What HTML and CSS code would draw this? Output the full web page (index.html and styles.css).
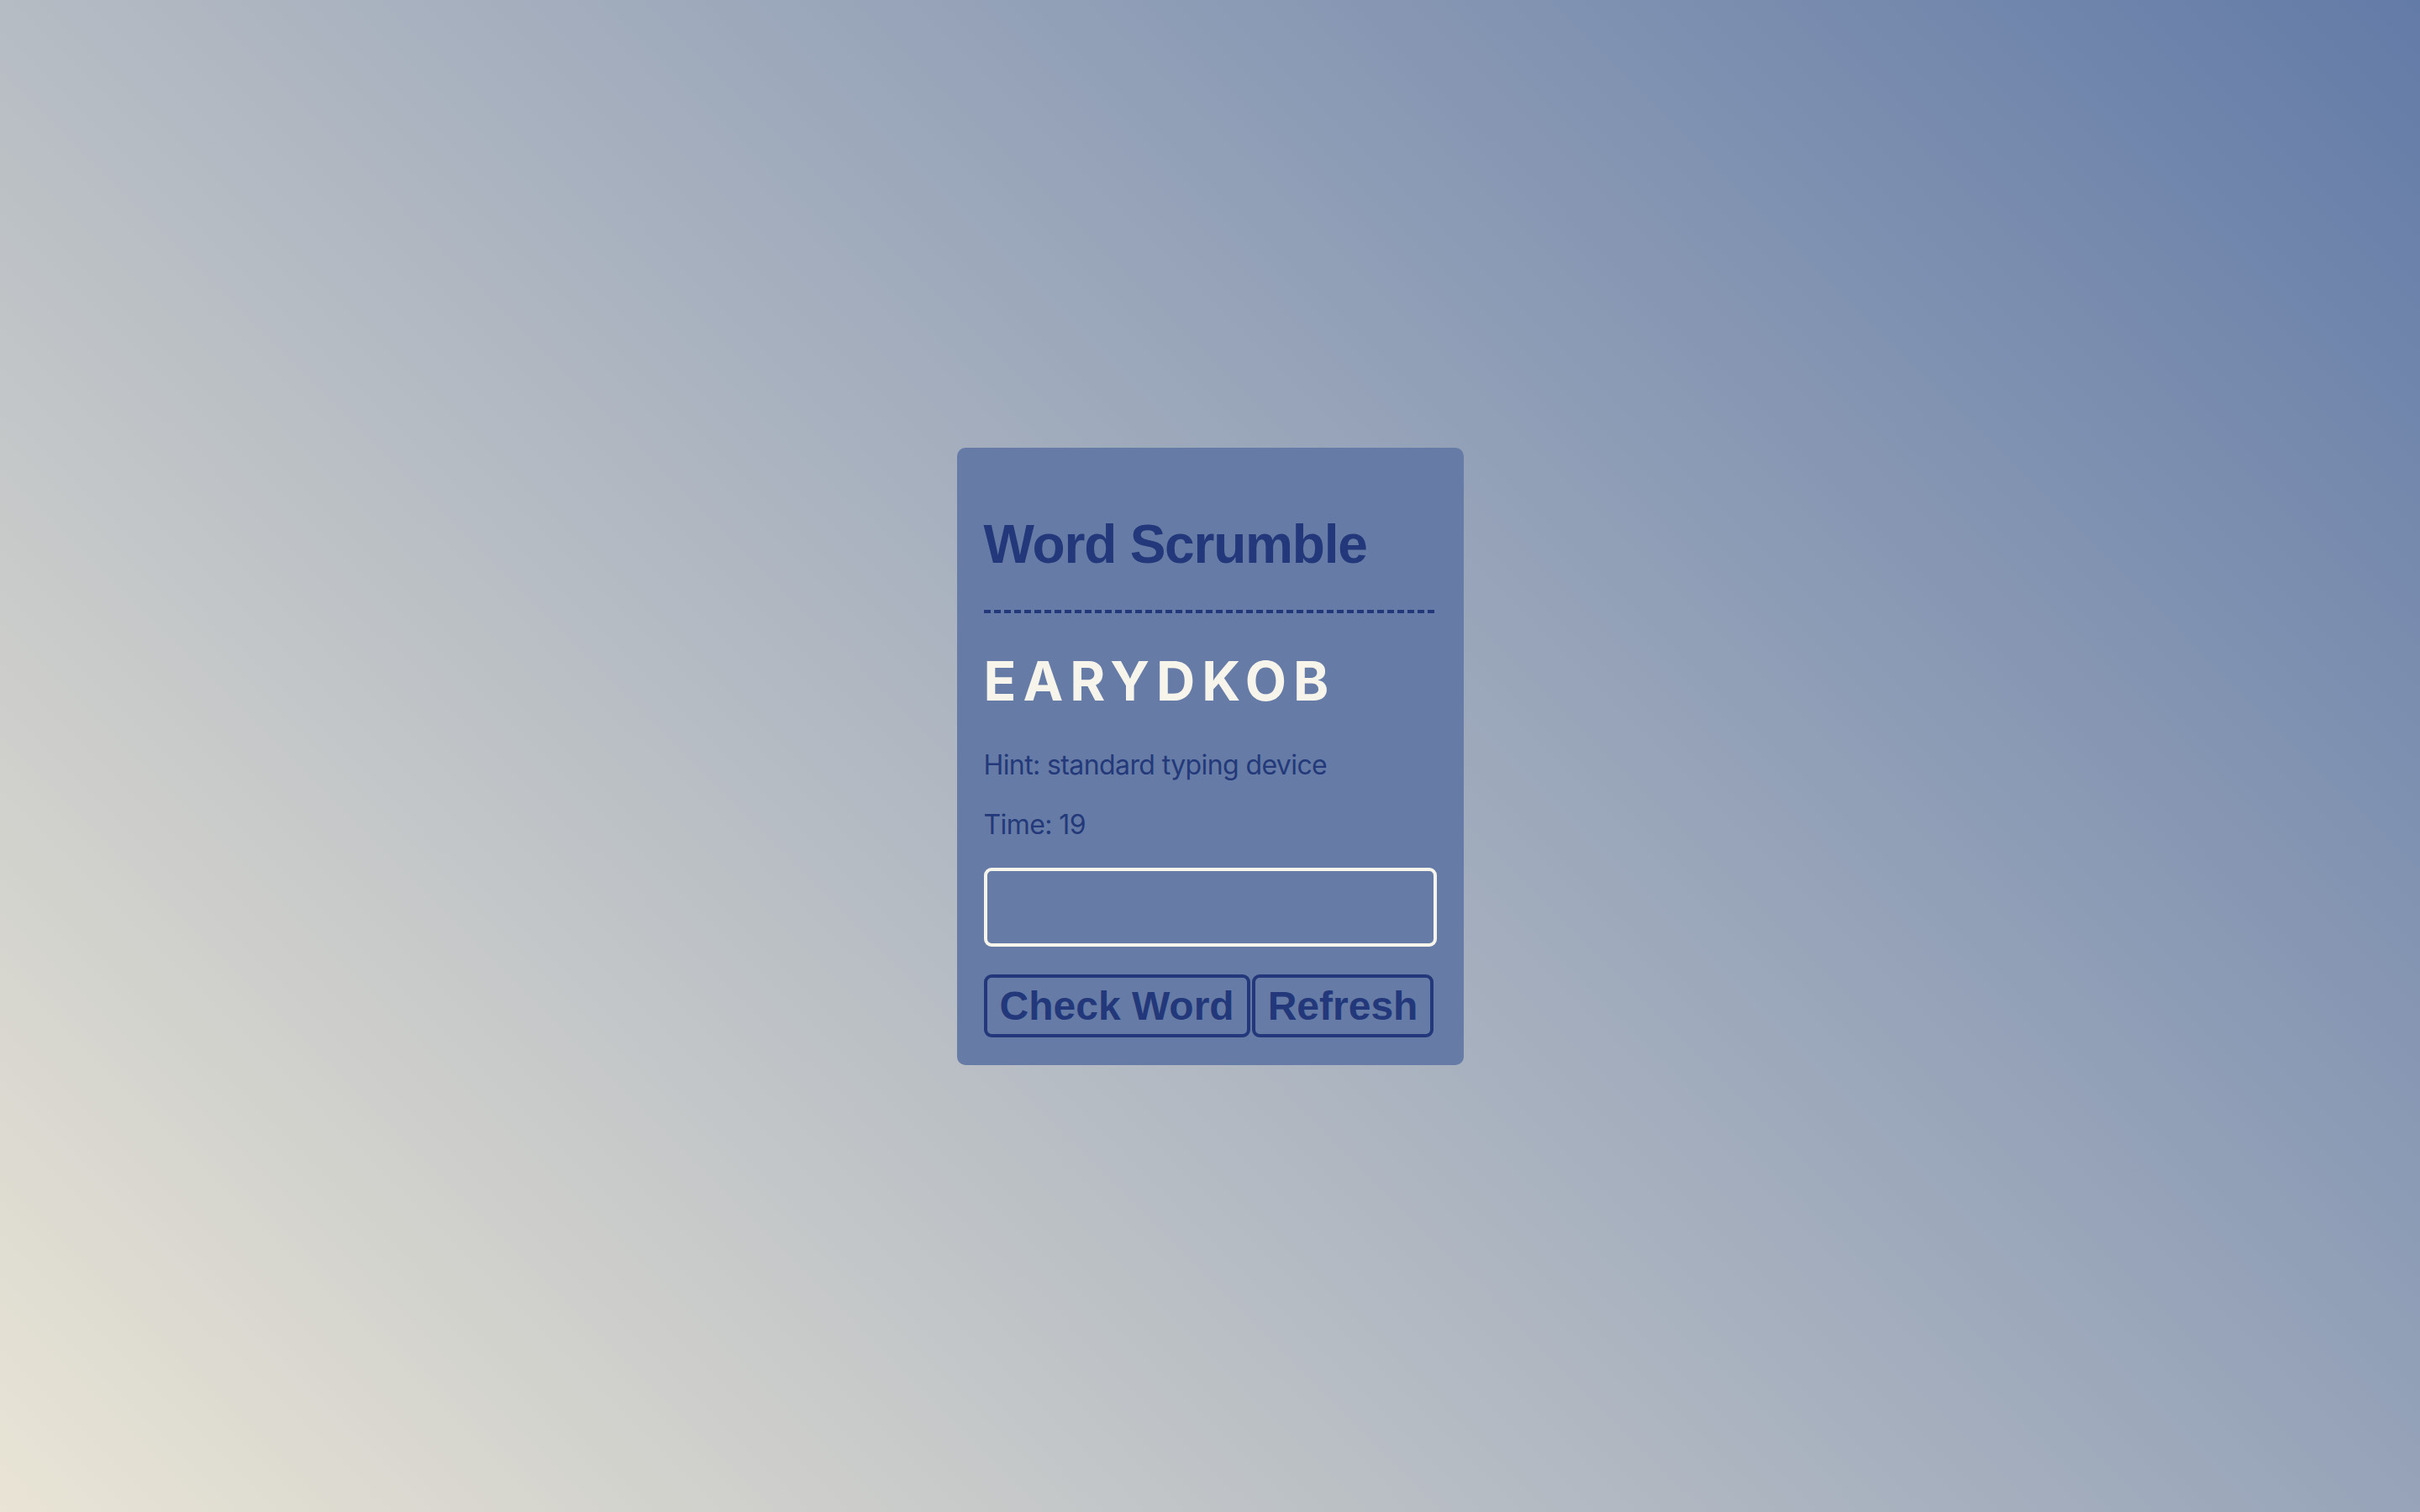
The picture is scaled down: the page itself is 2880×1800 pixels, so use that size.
FILE: index.html
```html
<!DOCTYPE html>
<html lang="en">
<head>
<meta charset="utf-8">
<title>Word Scrumble</title>
<link rel="stylesheet" href="styles.css">
</head>
<body>
  <main class="card">
    <h1 class="title">Word Scrumble</h1>
    <div class="divider"></div>
    <div class="letters">EARYDKOB</div>
    <p class="hint">Hint: standard typing device</p>
    <p class="time">Time: 19</p>
    <input class="answer" type="text" autofocus>
    <div class="actions">
      <button class="btn" type="button">Check Word</button>
      <button class="btn" type="button">Refresh</button>
    </div>
  </main>
</body>
</html>
```
FILE: styles.css
```css
html, body {
  height: 100%;
}
body {
  margin: 0;
  display: flex;
  align-items: center;
  justify-content: center;
  background: linear-gradient(45deg, #e9e4d5 0%, #637ba7 100%);
  font-family: Inter, "Noto Sans", sans-serif;
  color: #23387a;
}
.card {
  width: 539px;
  padding: 0 32px 33px;
  background: #667ca6;
  border-radius: 10px;
  display: flex;
  flex-direction: column;
}
.title {
  margin: 78px 0 41px;
  font-family: "Liberation Sans", Arial, sans-serif;
  font-weight: 700;
  font-size: 64px;
  line-height: 74px;
  letter-spacing: -1.2px;
  color: #22387a;
}
.divider {
  height: 4px;
  background: repeating-linear-gradient(90deg, #22387a 0 8px, transparent 8px 12px);
}
.letters {
  margin-top: 42px;
  font-family: Inter, sans-serif;
  font-weight: 700;
  font-size: 64px;
  line-height: 78px;
  letter-spacing: 8px;
  color: #f7f4ec;
}
.hint, .time {
  margin: 0;
  font-size: 32px;
  line-height: 39px;
  letter-spacing: -0.6px;
  color: #23397a;
}
.hint {
  margin-top: 41px;
}
.time {
  margin-top: 32px;
}
.answer {
  margin-top: 32px;
  height: 94px;
  box-sizing: border-box;
  border: 4px solid #f7f4ec;
  border-radius: 9px;
  background: transparent;
  padding: 0 16px;
  font-family: Inter, sans-serif;
  font-size: 44px;
  color: #f7f4ec;
  caret-color: #f7f4ec;
  outline: none;
}
.actions {
  margin-top: 33px;
  display: flex;
  gap: 2px;
}
.btn {
  background: transparent;
  border: 4px solid #22387a;
  border-radius: 9px;
  padding: 6px 15px;
  font-family: "Liberation Sans", Arial, sans-serif;
  font-weight: 700;
  font-size: 48px;
  line-height: normal;
  color: #22387a;
}
```
